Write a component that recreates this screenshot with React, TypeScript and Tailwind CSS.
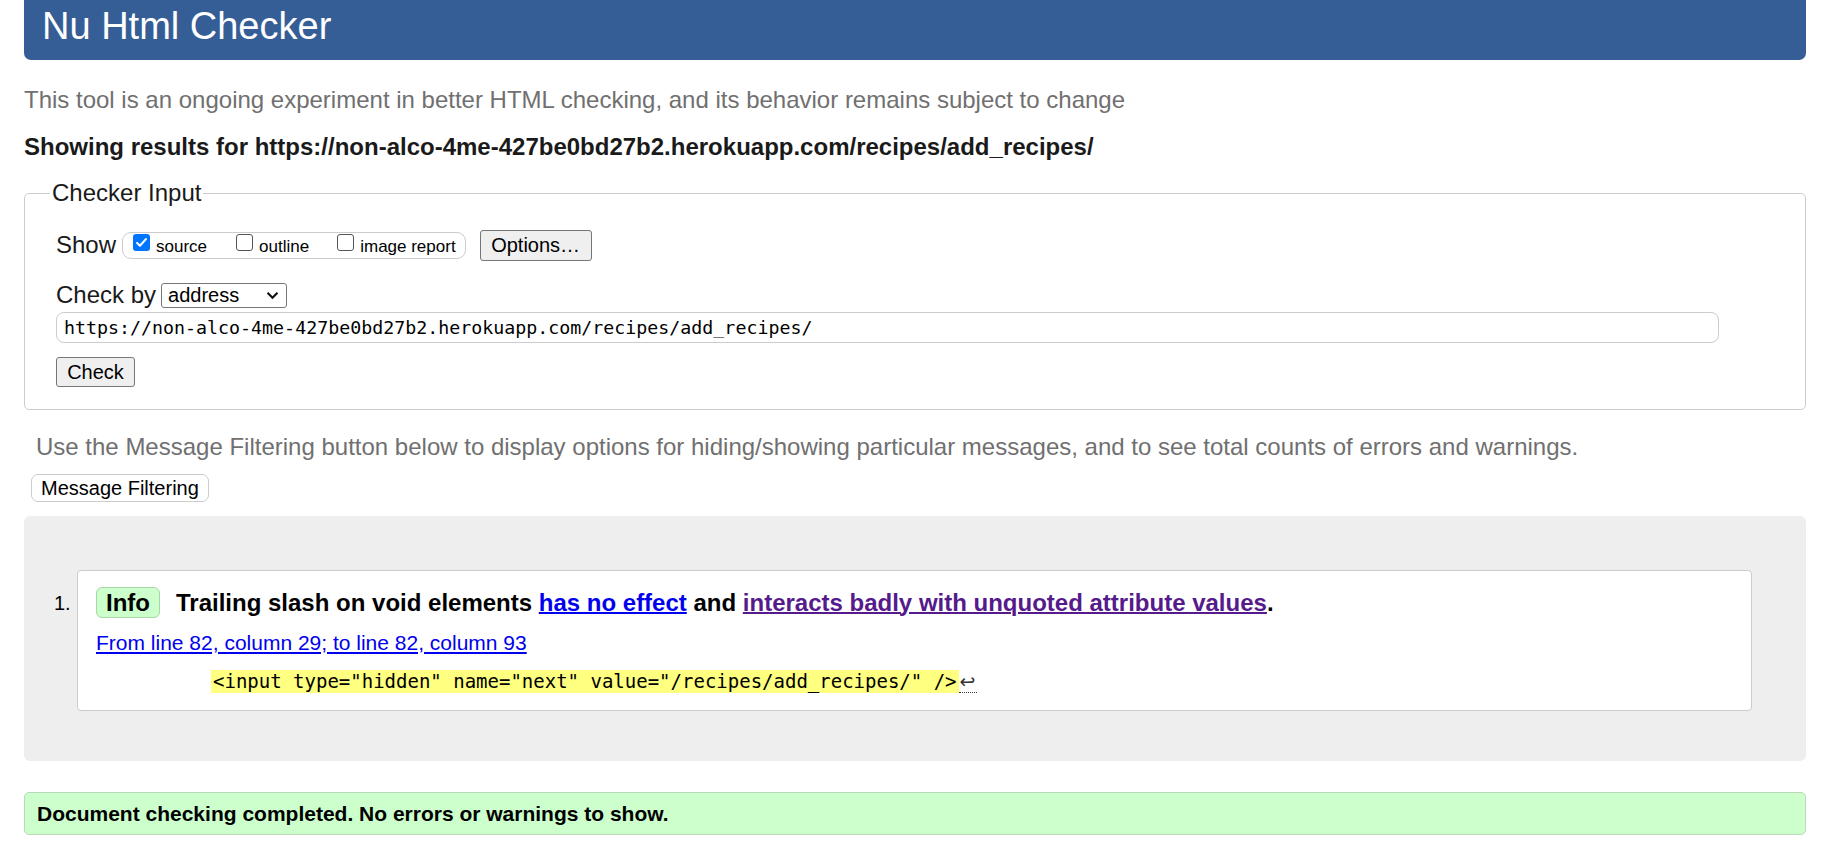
import React from 'react';

const Checkbox: React.FC<{ checked?: boolean }> = ({ checked }) =>
  checked ? (
    <span className="inline-flex h-[17px] w-[17px] shrink-0 items-center justify-center rounded-[3px] bg-[#0075ff]">
      <svg viewBox="0 0 16 16" className="h-[15px] w-[15px]">
        <path d="M3.2 8.4l3.1 3 6.4-7" fill="none" stroke="white" strokeWidth="2.2" strokeLinecap="round" strokeLinejoin="round" />
      </svg>
    </span>
  ) : (
    <span className="inline-block h-[17px] w-[17px] shrink-0 rounded-[3px] border border-[#555] bg-white" />
  );

const ShowOption: React.FC<{ label: string; checked?: boolean; className?: string }> = ({ label, checked, className }) => (
  <span className={`flex items-start ${className ?? ''}`}>
    <Checkbox checked={checked} />
    <span className="ml-[6px] mt-[3px] text-[17px] leading-[20px]">{label}</span>
  </span>
);

const App: React.FC = () => {
  return (
    <div className="min-h-[850px] bg-white pl-[24px] pr-[26px] font-['Liberation_Sans',Arial,sans-serif] text-black">
      <h1 className="h-[60px] rounded-b-[7px] bg-[#365e96] pl-[18px] text-[38px] leading-[52px] text-white">
        Nu Html Checker
      </h1>

      <p className="mt-[26px] text-[24px] leading-[28px] text-[#707070]">
        This tool is an ongoing experiment in better HTML checking, and its behavior remains subject to change
      </p>
      <p className="mt-[19px] text-[24px] font-bold leading-[28px] text-[#1a1a1a]">
        Showing results for https://non-alco-4me-427be0bd27b2.herokuapp.com/recipes/add_recipes/
      </p>

      <fieldset className="mt-[18px] rounded-[5px] border border-[#cccccc] pb-[22px] pl-[31px] pr-[86px]">
        <legend className="-ml-[6px] px-[2px] text-[24px] leading-[28px] text-[#1a1a1a]">Checker Input</legend>

        <div className="mt-[23px] flex h-[30px] items-center">
          <span className="text-[24px] leading-[28px] text-[#1a1a1a]">Show</span>
          <div className="ml-[6px] flex h-[27px] items-start rounded-[9px] border border-[#cccccc] pl-[10px] pr-[9px] pt-[1px]">
            <ShowOption label="source" checked />
            <ShowOption label="outline" className="ml-[29px]" />
            <ShowOption label="image report" className="ml-[28px]" />
          </div>
          <button className="ml-[14px] h-[31px] w-[112px] rounded-[3px] border border-[#767676] bg-[#efefef] text-[20px] leading-[24px]">
            Options…
          </button>
        </div>

        <div className="mt-[21px] flex h-[28px] items-center">
          <span className="text-[24px] leading-[28px] text-[#1a1a1a]">Check by</span>
          <div className="ml-[5px] flex h-[25px] w-[126px] items-center justify-between rounded-[3px] border border-[#767676] bg-white pl-[6px] pr-[7px]">
            <span className="text-[20px] leading-[24px]">address</span>
            <svg viewBox="0 0 14 10" className="h-[9px] w-[13px]">
              <path d="M1.5 2l5.5 5.5 5.5-5.5" fill="none" stroke="#111" strokeWidth="2.4" />
            </svg>
          </div>
        </div>

        <div className="mt-[3px] flex h-[31px] items-center rounded-[8px] border border-[#cccccc] pl-[7px] font-['DejaVu_Sans_Mono',monospace] text-[18.3px] leading-[22px]">
          https://non-alco-4me-427be0bd27b2.herokuapp.com/recipes/add_recipes/
        </div>

        <button className="mt-[14px] block h-[30px] w-[79px] rounded-[3px] border border-[#767676] bg-[#efefef] text-[20px] leading-[24px]">
          Check
        </button>
      </fieldset>

      <p className="mt-[23px] pl-[12px] text-[24px] leading-[28px] text-[#707070]">
        Use the Message Filtering button below to display options for hiding/showing particular messages, and to see total counts of errors and warnings.
      </p>

      <button className="ml-[7px] mt-[13px] block h-[28px] rounded-[7px] border border-[#cccccc] bg-white px-[9px] text-[20px] leading-[24px]">
        Message Filtering
      </button>

      <div className="mt-[14px] flex h-[245px] items-start rounded-[6px] bg-[#eeeeee] pl-[30px] pr-[54px] pt-[54px]">
        <span className="w-[23px] shrink-0 pt-[21px] text-[20px] leading-[24px]">1.</span>
        <div className="flex h-[141px] flex-1 flex-col rounded-[4px] border border-[#cccccc] bg-white pl-[18px] pt-[16px]">
          <div className="flex h-[31px] items-center">
            <span className="flex h-[31px] items-center rounded-[6px] border border-[#a8d8a8] bg-[#ccffcc] px-[9px] text-[24px] font-bold leading-[28px]">
              Info
            </span>
            <span className="ml-[16px] text-[24px] font-bold leading-[28px]">
              Trailing slash on void elements{' '}
              <a href="#" className="text-[#0000ee] underline decoration-2">has no effect</a>
              {' '}and{' '}
              <a href="#" className="text-[#551a8b] underline decoration-2">interacts badly with unquoted attribute values</a>
              .
            </span>
          </div>
          <a href="#" className="mt-[13px] self-start text-[21px] leading-[24px] text-[#0000ee] underline">
            From line 82, column 29; to line 82, column 93
          </a>
          <div className="ml-[115px] mt-[15px] flex h-[23px] items-stretch font-['DejaVu_Sans_Mono',monospace] text-[19px] leading-[23px]">
            <code className="bg-[#ffff80] px-[2px] font-['DejaVu_Sans_Mono',monospace]">{'<input type="hidden" name="next" value="/recipes/add_recipes/" />'}</code>
            <span className="flex items-center border-b border-dotted border-[#333] pl-[1px] pr-[2px] font-['DejaVu_Sans',sans-serif] text-[19px] leading-[22px] text-[#333]">↩</span>
          </div>
        </div>
      </div>

      <div className="mt-[31px] flex h-[43px] items-center rounded-[5px] border border-[#b9d9b9] bg-[#ccffcc] pl-[12px] text-[21px] font-bold leading-[24px]">
        Document checking completed. No errors or warnings to show.
      </div>
    </div>
  );
};

export default App;
